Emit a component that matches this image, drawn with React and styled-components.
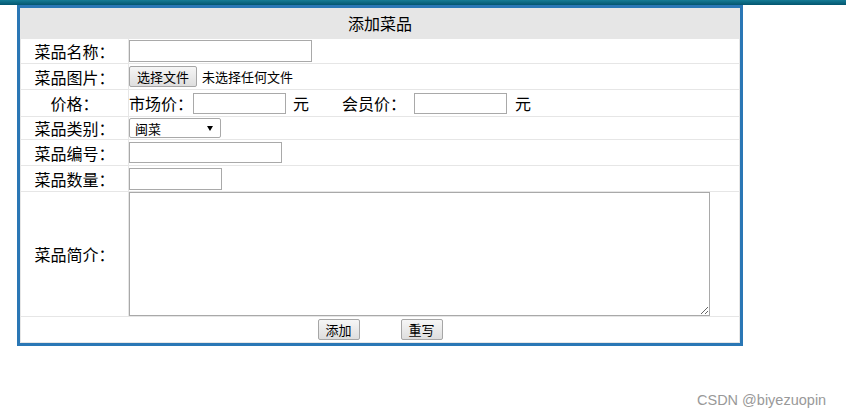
import React from 'react';
import styled, { createGlobalStyle } from 'styled-components';

const GlobalStyle = createGlobalStyle`
  html, body {
    margin: 0;
    padding: 0;
    background: #fff;
  }
  body {
    font-family: "Noto Sans CJK SC", "Liberation Sans", sans-serif;
    color: #000;
  }
`;

const Page = styled.div`
  position: relative;
  width: 846px;
  height: 417px;
  overflow: hidden;
`;

const TopBar = styled.div`
  height: 5px;
  background: linear-gradient(to bottom, #157b95, #03566f);
`;

const FormBox = styled.div`
  margin-left: 17px;
  width: 726px;
  box-sizing: border-box;
  border: 3px solid #2a77b5;
`;

const FormTable = styled.div`
  border: 1px solid #e6e6e6;
  border-top: none;
  border-bottom: none;
`;

const Caption = styled.div`
  height: 30px;
  margin: 0 -1px;
  background: #e6e6e6;
  border-bottom: 1px solid #e6e6e6;
  display: flex;
  align-items: center;
  justify-content: center;
  font-size: 16px;
  line-height: 1;
`;

const Row = styled.div`
  display: grid;
  grid-template-columns: 108px 1fr;
  height: ${p => p.h}px;
  box-sizing: border-box;
  border-bottom: 1px solid #e6e6e6;
`;

const Label = styled.div`
  display: flex;
  align-items: center;
  justify-content: center;
  border-right: 1px solid #e6e6e6;
  font-size: 16px;
  line-height: 1;
`;

const Field = styled.div`
  display: flex;
  align-items: ${p => (p.stretch ? 'stretch' : 'center')};
  font-size: 16px;
  line-height: 1;
`;

const TextInput = styled.input`
  width: ${p => p.w}px;
  height: ${p => p.h || 21}px;
  box-sizing: border-box;
  border: 1px solid #a9a9a9;
  padding: 0 2px;
  margin: ${p => p.m || '0'};
  font-size: 13px;
  outline: none;
`;

const Unit = styled.span`
  margin: ${p => p.m || '0'};
  white-space: nowrap;
`;

const GrayButton = styled.button`
  width: ${p => p.w}px;
  height: 21px;
  box-sizing: border-box;
  padding: 0;
  border: 1px solid #a6a6a6;
  border-radius: 2px;
  background: linear-gradient(to bottom, #f6f6f6, #dedede);
  font-family: "Noto Sans CJK SC", sans-serif;
  font-size: 13px;
  line-height: 1;
  color: #000;
`;

const FileNote = styled.span`
  margin-left: 5px;
  font-size: 13px;
`;

const SelectWrap = styled.div`
  position: relative;
  width: 92px;
  height: 20px;
`;

const Select = styled.select`
  appearance: none;
  width: 100%;
  height: 100%;
  box-sizing: border-box;
  border: 1px solid #a9a9a9;
  border-radius: 2px;
  background: #fff;
  padding: 0 0 0 5px;
  font-family: "Noto Sans CJK SC", sans-serif;
  font-size: 13px;
  color: #000;
  outline: none;
`;

const Arrow = styled.span`
  position: absolute;
  right: 8px;
  top: 8px;
  width: 0;
  height: 0;
  border-left: 3px solid transparent;
  border-right: 3px solid transparent;
  border-top: 5px solid #000;
  pointer-events: none;
`;

const TextArea = styled.textarea`
  width: 581px;
  box-sizing: border-box;
  border: 1px solid #a9a9a9;
  margin: 0;
  padding: 2px;
  resize: both;
  outline: none;
`;

const ActionRow = styled.div`
  height: 26px;
  box-sizing: border-box;
  border-bottom: 1px solid #e6e6e6;
  display: flex;
  align-items: center;
  justify-content: center;
  gap: 41px;
`;

const Watermark = styled.div`
  position: absolute;
  left: 697px;
  top: 392px;
  font-family: "Liberation Sans", Arial, sans-serif;
  font-size: 14.5px;
  color: #999;
  white-space: nowrap;
`;

export default function App() {
  return (
    <Page>
      <GlobalStyle />
      <TopBar />
      <FormBox>
        <FormTable>
          <Caption>添加菜品</Caption>
          <Row h={25}>
            <Label>菜品名称：</Label>
            <Field><TextInput w={183} h={22} /></Field>
          </Row>
          <Row h={26}>
            <Label>菜品图片：</Label>
            <Field>
              <GrayButton w={68}>选择文件</GrayButton>
              <FileNote>未选择任何文件</FileNote>
            </Field>
          </Row>
          <Row h={27}>
            <Label>价格：</Label>
            <Field>
              <Unit>市场价：</Unit>
              <TextInput w={93} />
              <Unit m="0 0 0 7px">元</Unit>
              <Unit m="0 0 0 33px">会员价：</Unit>
              <TextInput w={93} m="0 0 0 8px" />
              <Unit m="0 0 0 8px">元</Unit>
            </Field>
          </Row>
          <Row h={23}>
            <Label>菜品类别：</Label>
            <Field>
              <SelectWrap>
                <Select defaultValue="闽菜">
                  <option>闽菜</option>
                  <option>川菜</option>
                  <option>粤菜</option>
                  <option>鲁菜</option>
                </Select>
                <Arrow />
              </SelectWrap>
            </Field>
          </Row>
          <Row h={26}>
            <Label>菜品编号：</Label>
            <Field><TextInput w={153} /></Field>
          </Row>
          <Row h={26}>
            <Label>菜品数量：</Label>
            <Field><TextInput w={93} h={22} /></Field>
          </Row>
          <Row h={125}>
            <Label>菜品简介：</Label>
            <Field stretch><TextArea /></Field>
          </Row>
          <ActionRow>
            <GrayButton w={42}>添加</GrayButton>
            <GrayButton w={42}>重写</GrayButton>
          </ActionRow>
        </FormTable>
      </FormBox>
      <Watermark>CSDN @biyezuopin</Watermark>
    </Page>
  );
}
